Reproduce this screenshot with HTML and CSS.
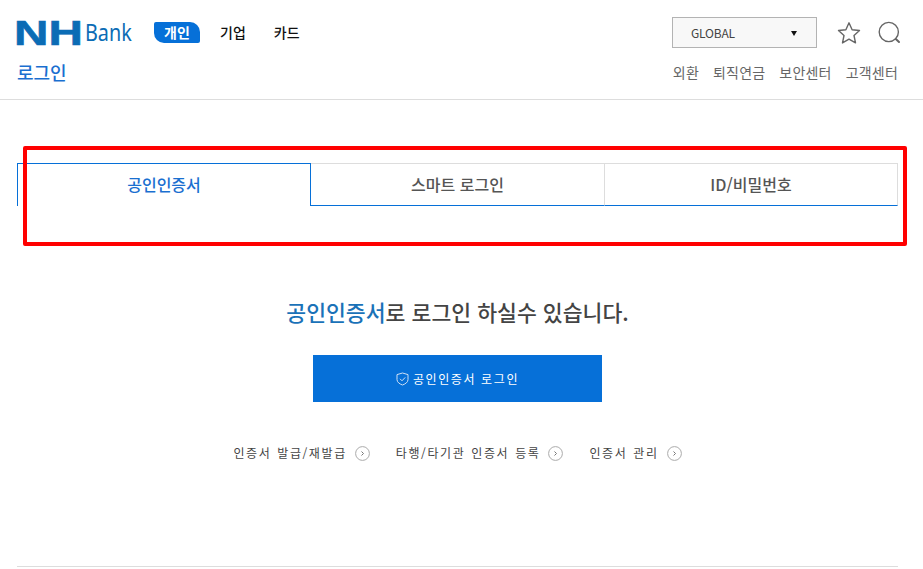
FILE: index.html
```html
<!DOCTYPE html>
<html lang="ko">
<head>
  <meta charset="UTF-8">
  <meta name="viewport" content="width=device-width, initial-scale=1.0">
  <title>NH Bank 로그인</title>
  <link rel="stylesheet" href="styles.css">
</head>
<body>
<header class="header">
  <div class="header-top">
    <div class="logo"><span class="logo-nh">NH</span><span class="logo-bank">Bank</span></div>
    <nav class="main-nav">
      <a class="main-link active" href="#">개인</a>
      <a class="main-link" href="#">기업</a>
      <a class="main-link" href="#">카드</a>
    </nav>
    <div class="tools">
      <div class="global">GLOBAL<span class="caret"></span></div>
      <svg class="tool-icon" width="24" height="24" viewBox="0 0 24 24" fill="none" stroke="#666" stroke-width="1.4" stroke-linejoin="round">
        <path d="M12 1.8l3.1 6.9 7.4.8-5.5 5 1.5 7.4-6.5-3.8-6.5 3.8 1.5-7.4-5.5-5 7.4-.8z"/>
      </svg>
      <svg class="tool-icon" width="23" height="24" viewBox="0 0 23 24" fill="none" stroke="#666" stroke-width="1.4" stroke-linecap="round">
        <circle cx="10.8" cy="11" r="9.6"/>
        <path d="M17.8 18l3.2 3" stroke-width="2"/>
      </svg>
    </div>
  </div>
  <div class="header-bottom">
    <h1 class="page-title">로그인</h1>
    <nav class="sub-nav">
      <a href="#">외환</a>
      <a href="#">퇴직연금</a>
      <a href="#">보안센터</a>
      <a href="#">고객센터</a>
    </nav>
  </div>
</header>

<main class="content">
  <div class="tabs">
    <a class="tab active" href="#">공인인증서</a>
    <a class="tab" href="#">스마트 로그인</a>
    <a class="tab" href="#">ID/비밀번호</a>
  </div>

  <h2 class="lead"><span class="lead-em">공인인증서</span>로 로그인 하실수 있습니다.</h2>

  <a class="login-btn" href="#">
    <svg width="13" height="14" viewBox="0 0 13 14" fill="none" stroke="#cfe0f5" stroke-width="1">
      <path d="M6.5 1l5.5 1.6v5c0 2.6-2.6 4.400-5.500 5.400-2.900-1-5.500-2.800-5.500-5.400v-5z"/>
      <path d="M4 6.800l2 2 3.200-3.400"/>
    </svg>
    공인인증서 로그인
  </a>

  <div class="links">
    <a class="link" href="#">인증서 발급/재발급<span class="arrow"><svg width="15" height="15" viewBox="0 0 15 15" fill="none" stroke="#aaa"><circle cx="7.500" cy="7.500" r="6.900"/><path d="M6.500 5.500l2 2-2 2" stroke="#777"/></svg></span></a>
    <a class="link" href="#">타행/타기관 인증서 등록<span class="arrow"><svg width="15" height="15" viewBox="0 0 15 15" fill="none" stroke="#aaa"><circle cx="7.500" cy="7.500" r="6.900"/><path d="M6.500 5.500l2 2-2 2" stroke="#777"/></svg></span></a>
    <a class="link" href="#">인증서 관리<span class="arrow"><svg width="15" height="15" viewBox="0 0 15 15" fill="none" stroke="#aaa"><circle cx="7.500" cy="7.500" r="6.900"/><path d="M6.500 5.500l2 2-2 2" stroke="#777"/></svg></span></a>
  </div>

  <div class="foot-line"></div>
</main>

<div class="highlight"></div>
</body>
</html>
```

FILE: styles.css
```css
html, body {
  height: 100%;
}
body {
  margin: 0;
  background-color: #fff;
  color: #333;
  font-family: "Noto Sans CJK KR", "Noto Sans", sans-serif;
  overflow: hidden;
}
a {
  text-decoration: none;
  color: inherit;
}
.header {
  height: 82px;
  border-bottom: 1px solid #ddd;
  padding: 17px 22px 0 17px;
}
.header-top {
  display: flex;
  align-items: center;
  height: 31px;
}
.logo {
  display: flex;
  align-items: center;
  width: 137px;
  color: #0b6cb5;
}
.logo-nh {
  font-family: "Liberation Sans", sans-serif;
  font-weight: 700;
  font-size: 35px;
  line-height: 31px;
  width: 66px;
  margin-left: -3px;
  transform: scaleX(1.36);
  transform-origin: left center;
  -webkit-text-stroke: 0.6px #0b6cb5;
}
.logo-bank {
  font-family: "Noto Sans", sans-serif;
  font-size: 23px;
  line-height: 31px;
  margin-left: 5px;
  transform: scaleX(0.86);
  transform-origin: left center;
}
.main-nav {
  display: flex;
  align-items: center;
}
.main-link {
  font-size: 14px;
  font-weight: 500;
  color: #111;
  line-height: 21px;
  margin-right: 28px;
}
.main-link.active {
  width: 46px;
  text-align: center;
  margin-right: 20px;
  color: #fff;
  font-weight: 700;
  background-color: #0670d8;
  border-radius: 2px 10px 2px 10px;
}
.tools {
  display: flex;
  align-items: center;
  margin-left: auto;
}
.global {
  width: 145px;
  height: 31px;
  box-sizing: border-box;
  border: 1px solid #b3b3b3;
  background-color: #f8f8f8;
  padding: 0 19px 0 18px;
  display: flex;
  align-items: center;
  justify-content: space-between;
  font-size: 12px;
  letter-spacing: -0.2px;
  color: #444;
}
.caret {
  width: 0;
  height: 0;
  border-left: 3.500px solid transparent;
  border-right: 3.500px solid transparent;
  border-top: 5px solid #111;
  margin-top: 2px;
}
.tool-icon {
  margin-left: 20px;
}
.tool-icon + .tool-icon {
  margin-left: 17px;
}
.header-bottom {
  display: flex;
  justify-content: space-between;
  align-items: center;
  margin-top: 11px;
  margin-right: 3px;
  height: 26px;
}
.page-title {
  margin: 0;
  font-size: 18px;
  font-weight: 500;
  color: #1a6fd0;
}
.sub-nav {
  display: flex;
  gap: 14px;
  font-size: 14px;
  letter-spacing: 0.2px;
  color: #666;
}
.content {
  padding: 63px 25px 0 17px;
}
.tabs {
  display: grid;
  grid-template-columns: 294px 294px 293px;
  height: 43px;
}
.tab {
  display: flex;
  align-items: center;
  justify-content: center;
  box-sizing: border-box;
  padding-bottom: 2px;
  border-top: 1px solid #ddd;
  border-right: 1px solid #ddd;
  border-bottom: 1px solid #0670d8;
  font-size: 16px;
  font-weight: 500;
  color: #555;
}
.tab.active {
  color: #1a6fd0;
  border: 1px solid #0670d8;
  border-bottom: none;
}
.lead {
  margin: 92px 0 0;
  text-align: center;
  font-size: 21.600px;
  font-weight: 500;
  line-height: 28px;
  color: #444;
}
.lead-em {
  color: #1a72b8;
}
.login-btn {
  display: flex;
  align-items: center;
  justify-content: center;
  gap: 4px;
  width: 289px;
  height: 47px;
  margin: 29px auto 0;
  background-color: #0670d8;
  color: #fff;
  font-size: 12px;
  letter-spacing: 1.600px;
}
.links {
  display: flex;
  justify-content: center;
  gap: 26px;
  margin-top: 42px;
  font-size: 12px;
  letter-spacing: 1.600px;
  word-spacing: 1px;
  color: #444;
}
.link {
  display: flex;
  align-items: center;
  gap: 8px;
  line-height: 18px;
}
.arrow {
  display: flex;
}
.foot-line {
  height: 1px;
  margin-top: 104px;
  background-color: #ddd;
}
.highlight {
  position: absolute;
  left: 23px;
  top: 146px;
  width: 876px;
  height: 92px;
  border: 4px solid #f00;
  border-radius: 2px;
}
```
